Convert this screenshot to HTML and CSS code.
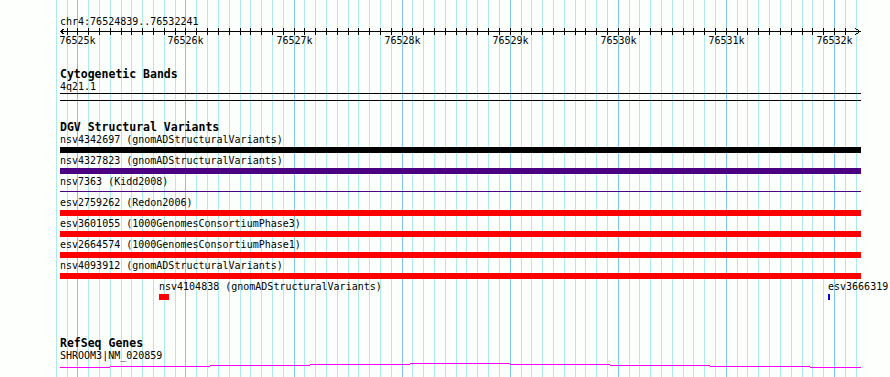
FILE: index.html
```html
<!DOCTYPE html>
<html lang="en">
<head>
    <meta charset="UTF-8">
    <meta name="viewport" content="width=device-width, initial-scale=1.0">
    <title>chr4:76524839..76532241</title>
    <link rel="stylesheet" href="styles.css">
</head>
<body>

    <div class="browser">
        <!-- background grid, one line per 100bp -->
        <svg class="grid" id="grid" width="890" height="377"></svg>

        <div class="tracks">
            <!-- Ruler -->
            <div class="locus">chr4:76524839..76532241</div>
            <svg class="scale" id="scale" width="801" height="20"></svg>

            <!-- Cytogenetic Bands -->
            <section class="track bands">
                <h3 class="track-title">Cytogenetic Bands</h3>
                <div class="label">4q21.1</div>
                <div class="band"></div>
            </section>

            <!-- DGV Structural Variants -->
            <section class="track dgv">
                <h3 class="track-title">DGV Structural Variants</h3>
                <div id="dgv-rows"></div>
            </section>

            <!-- RefSeq Genes -->
            <section class="track genes">
                <h3 class="track-title">RefSeq Genes</h3>
                <div class="label">SHROOM3|NM_020859</div>
                <svg class="coverage" id="coverage" width="801" height="8"></svg>
            </section>
        </div>
    </div>

    <script>
        const VIEW_START = 76524839;
        const VIEW_END = 76532241;
        const TRACK_LEFT = 60;
        const TRACK_WIDTH = 800;
        const pxPerBp = TRACK_WIDTH / (VIEW_END - VIEW_START);
        const SVG_NS = "http://www.w3.org/2000/svg";

        function bpToPx(bp) {
            return Math.round((bp - VIEW_START) * pxPerBp);
        }

        function svgEl(tag, attrs) {
            const el = document.createElementNS(SVG_NS, tag);
            for (const key in attrs) el.setAttribute(key, attrs[key]);
            return el;
        }

        // Grid lines behind everything
        const grid = document.getElementById("grid");
        for (let bp = 76524800; bp <= 76532200; bp += 100) {
            const x = TRACK_LEFT + bpToPx(bp) + 0.5;
            grid.appendChild(svgEl("line", {
                x1: x, x2: x, y1: 0, y2: 377,
                class: bp % 1000 === 0 ? "major" : "minor"
            }));
        }

        // Ruler: axis, arrows, ticks and kb labels
        const scale = document.getElementById("scale");
        scale.appendChild(svgEl("line", { x1: 0, x2: 800, y1: 3.5, y2: 3.5, class: "axis" }));
        scale.appendChild(svgEl("polyline", { points: "4.5,0.5 0.5,3.5 4.5,6.5", class: "axis" }));
        scale.appendChild(svgEl("polyline", { points: "795.5,0.5 800,3.5 795.5,6.5", class: "axis" }));
        for (let bp = 76524900; bp <= 76532100; bp += 100) {
            const x = bpToPx(bp) + 0.5;
            scale.appendChild(svgEl("line", { x1: x, x2: x, y1: 0, y2: 7, class: "axis" }));
            if (bp % 1000 === 0) {
                const label = svgEl("text", { x: x, y: 16, class: "tick-label" });
                label.textContent = (bp / 1000) + "k";
                scale.appendChild(label);
            }
        }

        // DGV variants, one array per row
        const variants = [
            [{ name: "nsv4342697", source: "gnomADStructuralVariants", start: 76501200, end: 76556900, color: "#000000" }],
            [{ name: "nsv4327823", source: "gnomADStructuralVariants", start: 76519400, end: 76540100, color: "#4b0082" }],
            [{ name: "nsv7363", source: "Kidd2008", start: 76473300, end: 76561000, color: "#4b0082", thin: true }],
            [{ name: "esv2759262", source: "Redon2006", start: 76410000, end: 76601000, color: "#ff0000" }],
            [{ name: "esv3601055", source: "1000GenomesConsortiumPhase3", start: 76521800, end: 76535600, color: "#ff0000" }],
            [{ name: "esv2664574", source: "1000GenomesConsortiumPhase1", start: 76521800, end: 76535600, color: "#ff0000" }],
            [{ name: "nsv4093912", source: "gnomADStructuralVariants", start: 76522100, end: 76533700, color: "#ff0000" }],
            [
                { name: "nsv4104838", source: "gnomADStructuralVariants", start: 76525752, end: 76525850, color: "#ff0000" },
                { name: "esv3666319", start: 76531945, end: 76531964, color: "#0000ff" }
            ]
        ];

        const rowsEl = document.getElementById("dgv-rows");
        variants.forEach(row => {
            const rowEl = document.createElement("div");
            rowEl.className = "sv-row";
            row.forEach(sv => {
                const left = Math.max(0, bpToPx(sv.start));
                const right = Math.min(TRACK_WIDTH + 1, bpToPx(sv.end));
                const text = sv.source ? `${sv.name} (${sv.source})` : sv.name;
                const feature = document.createElement("div");
                feature.className = "feature";
                feature.style.left = left + "px";
                feature.innerHTML =
                    `<div class="feature-label">${text}</div>` +
                    `<div class="feature-bar${sv.thin ? " thin" : ""}"></div>`;
                const bar = feature.querySelector(".feature-bar");
                bar.style.width = Math.max(1, right - left) + "px";
                bar.style.background = sv.color;
                rowEl.appendChild(feature);
            });
            rowsEl.appendChild(rowEl);
        });

        // RefSeq coverage line, one flat step per 100px
        const steps = [
            [0, 50, 5], [50, 150, 4], [150, 250, 3], [250, 350, 2], [350, 450, 1],
            [450, 550, 2], [550, 650, 3], [650, 750, 4], [750, 801, 5]
        ];
        const coverage = document.getElementById("coverage");
        steps.forEach(([x1, x2, y]) => {
            coverage.appendChild(svgEl("rect", { x: x1, y: y, width: x2 - x1, height: 1, class: "gene-line" }));
        });
    </script>
</body>
</html>
```

FILE: styles.css
```css
/* General */
body {
    margin: 0;
    background-color: #fdfffd;
    color: #000;
    font-family: "DejaVu Sans Mono", "Liberation Mono", monospace;
    font-size: 10px;
}

.browser {
    position: relative;
    width: 890px;
    height: 377px;
    overflow: hidden;
}

/* Grid */
.grid {
    position: absolute;
    top: 0;
    left: 0;
    shape-rendering: crispEdges;
}

.grid .minor {
    stroke: #aeeaee;
    stroke-width: 1;
}

.grid .major {
    stroke: #80c6ea;
    stroke-width: 1;
}

.tracks {
    position: relative;
    width: 801px;
    padding-left: 60px;
}

/* Ruler */
.locus {
    padding-top: 16px;
    line-height: 12px;
}

.scale {
    display: block;
    overflow: visible;
}

.scale .axis {
    stroke: #000;
    stroke-width: 1;
    fill: none;
    shape-rendering: crispEdges;
}

.tick-label {
    font-family: "DejaVu Sans Mono", "Liberation Mono", monospace;
    font-size: 10px;
    text-anchor: middle;
    fill: #000;
}

/* Tracks */
.track-title {
    margin: 0;
    font-size: 11.5px;
    font-weight: bold;
    line-height: 13px;
}

.label {
    line-height: 12px;
    white-space: nowrap;
}

.bands {
    margin-top: 20px;
}

.band {
    height: 6px;
    border-top: 1px solid #000;
    border-bottom: 1px solid #000;
}

.dgv {
    margin-top: 20px;
}

.sv-row {
    position: relative;
    height: 21px;
}

.feature {
    position: absolute;
    top: 0;
}

.feature-label {
    line-height: 12px;
    white-space: nowrap;
}

.feature-bar {
    margin-top: 1px;
    height: 6px;
}

.feature-bar.thin {
    margin-top: 3px;
    height: 1px;
}

.genes {
    margin-top: 35px;
}

.coverage {
    display: block;
    overflow: visible;
    shape-rendering: crispEdges;
}

.gene-line {
    fill: #ff00ff;
}
```
